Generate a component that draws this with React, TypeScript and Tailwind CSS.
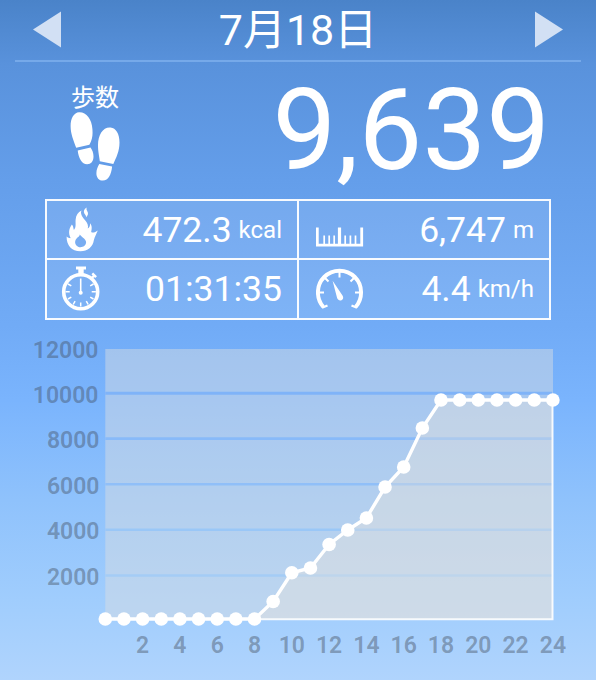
import type { ReactNode } from "react";

const HOURLY_Y = [
  619, 619, 619, 619, 619, 619, 619, 619, 619, 601.5, 572.8, 568, 544.5, 530, 518,
  487, 467, 428, 400, 400, 400, 400, 400, 400, 400,
];

const GRID = [
  { label: "10000", y: 393.2, color: "#7fb3f8", width: 3 },
  { label: "8000", y: 438.6, color: "#88baf9", width: 2.6 },
  { label: "6000", y: 484.3, color: "#90bff8", width: 2.4 },
  { label: "4000", y: 529.8, color: "#9ac7f7", width: 2.4 },
  { label: "2000", y: 575.5, color: "#a4ccf6", width: 2.4 },
];

const xAt = (hour: number) => 105.3 + hour * 18.65;

function Footprints() {
  return (
    <svg width="50" height="70" viewBox="0 0 50 70" fill="white">
      <path d="M9 .2C4 .5.6 6 .6 14c0 8 2.800 14 5.600 21.700l13.200-2.900c3-5.600 3.500-9.500 3-15.800C21.900 7 16-.3 9 .2Z" />
      <path d="M7.700 38.500 20.500 35.500c1.800 2.300 3 5.500 3 9 0 4.800-2.400 7.700-6.400 7.700-5.300 0-8.400-5.700-9.400-13.700Z" />
      <path d="M40.500 15.600C33 15 28 23 28 33c0 7 1.300 11 1.800 16.200l13.500 2.700C46 46 49.500 39.500 49.500 30.500 49.500 22 46 16 40.500 15.600Z" />
      <path d="m29.300 51.900 12.800 2.600c-.8 8-3.700 14.100-9.200 14.100-3.800 0-6.500-2.800-6.500-7.400 0-3.700 1.400-6.900 2.900-9.300Z" />
    </svg>
  );
}

function Flame() {
  return (
    <svg width="48" height="48" viewBox="0 0 48 48" fill="white">
      <path
        fillRule="evenodd"
        d="M21.500 5.500c-1.500 3 .7 6.500 3.600 9.700 2.300 2.900 3.500 5.200 2.700 8.400 2-1.200 2.400-3.400 2.200-5.400 2.300 2.300 1.800 5.600 1.200 8.800 1.500 1.200 4.300.2 6.600-1.600-1.300 3.200-3 6-3.900 9.600C32.900 42 27.700 46.200 20.500 46.200 11.500 46.200 6.500 40.500 6.600 31.500c1.400 1 2.700 1.800 4 1.600-2.600-5.600-1.500-9.700 1.300-13.600 1.500 1.600 1.300 3.500 2 5.400 2.600-3 1.400-6.200 1.700-10.200.4-4.500 2.500-7.600 5.900-9.200ZM19.800 29.500c-.1 1.800-2 2.600-3.400 4.200-2.300 2.800-1.300 6.600 1.700 8 3.500 1.500 7.600-.5 8-4.200.3-3.200-3.600-4.600-6.300-8Z"
      />
      <path d="M26.700 2.500c-3.200 2-3.400 4.700-1.800 6.700 1.100 1.300 1.300 2 1 3.200 2.400-2.100 2.600-4.500 1.400-6.200-.8-1.200-1-2.200-.6-3.700Z" />
    </svg>
  );
}

function Stopwatch() {
  return (
    <svg width="48" height="48" viewBox="0 0 48 48" fill="none" stroke="white">
      <circle cx="20.700" cy="26.700" r="17" strokeWidth="3.600" />
      <path d="M16 3h10" strokeWidth="3" />
      <path d="M21 3v7" strokeWidth="5.400" />
      <path d="m31.800 13 2.600-2.600M32.300 8.300l3.800 3.800" strokeWidth="2.400" />
      <path
        d="M5.500 26.700h4.200M31.700 26.700h4.200M20.700 37.500v4M8 19l3.300 1.900M8 34l3.300-1.900M30.200 20.900 33.500 19M30.200 32.100l3.300 1.900M13.200 39.500l1.900-3.300M28.200 39.500l-1.900-3.300"
        strokeWidth="1.500"
      />
      <path d="M20.700 13.500v14" strokeWidth="1.600" />
      <circle cx="20.700" cy="27.800" r="2" fill="white" stroke="none" />
    </svg>
  );
}

function Ruler() {
  return (
    <svg width="48" height="48" viewBox="0 0 48 48" fill="none" stroke="white">
      <path d="M1.300 22.500v17.600h44.400V22.500" strokeWidth="2.800" />
      <path d="M23.500 22.500v17" strokeWidth="3.200" />
      <path d="M8.200 30.500v9M13.200 30.500v9M18.200 30.500v9M29.200 30.500v9M34.400 30.500v9M39.500 30.500v9" strokeWidth="1.700" />
    </svg>
  );
}

function Gauge() {
  return (
    <svg width="48" height="48" viewBox="0 0 48 48" fill="none" stroke="white">
      <path d="M7.200 41.800C3.600 37.700 1.900 32.700 1.900 27.300 1.900 15.300 11.500 5.700 23.500 5.700s21.600 9.600 21.600 21.600c0 5.400-1.700 10.400-5.300 14.500" strokeWidth="3.900" />
      <path d="m6 42.800 5.500-2.300M41 42.800 35.500 40.500" strokeWidth="2.200" />
      <path d="M23.500 6.500v6M2.500 27.500H8M39 27.500h5.500M9 13l3.500 3.500M38 13 34.500 16.500" strokeWidth="2" />
      <path d="m16.600 15.800 9.900 14.800c1.400 2.300.5 4-1 4.600-1.700.7-3.600 0-4.400-2.200Z" fill="white" stroke="none" />
    </svg>
  );
}

function Metric({
  icon,
  value,
  unit,
  className = "",
}: {
  icon: ReactNode;
  value: string;
  unit?: string;
  className?: string;
}) {
  return (
    <div className={`flex items-center justify-between bg-white/10 ${className}`}>
      {icon}
      <div className="flex items-center gap-[7px] pt-px leading-[56px] whitespace-nowrap">
        <span className="text-[35.5px]">{value}</span>
        {unit && <span className="text-[24px]">{unit}</span>}
      </div>
    </div>
  );
}

function StepsChart() {
  const points = HOURLY_Y.map((y, hour) => `${xAt(hour)},${y}`).join(" ");
  return (
    <svg className="block font-semibold" width="596" height="360" viewBox="0 320 596 360">
      <rect x="105.300" y="349" width="447.700" height="270.500" fill="rgba(220,222,225,.46)" />
      {GRID.map((g) => (
        <path key={g.label} d={`M105.300 ${g.y}H552`} stroke={g.color} strokeWidth={g.width} />
      ))}
      <polygon points={`254.500,619 ${points} 553,619`} fill="rgba(239,228,219,.35)" />
      <path d="M254 619.300H552.500V400" fill="none" stroke="white" strokeOpacity=".88" strokeWidth="2" />
      <polyline points={points} fill="none" stroke="white" strokeWidth="3.400" />
      {HOURLY_Y.map((y, hour) => (
        <circle key={hour} cx={xAt(hour)} cy={y} r="6.800" fill="white" />
      ))}
      <g fill="rgba(65,75,90,.43)" fontSize="23">
        <g textAnchor="end">
          <text x="98.500" y="357.700">12000</text>
          {GRID.map((g, i) => (
            <text key={g.label} x={i === 0 ? 98.5 : 99.5} y={g.y + 9.6}>
              {g.label}
            </text>
          ))}
        </g>
        <g textAnchor="middle">
          {Array.from({ length: 12 }, (_, i) => (i + 1) * 2).map((hour) => (
            <text key={hour} x={xAt(hour)} y="653">
              {hour}
            </text>
          ))}
        </g>
      </g>
    </svg>
  );
}

export default function App() {
  return (
    <main className="h-[680px] w-[596px] overflow-hidden bg-[linear-gradient(to_bottom,#4a83c9_0px,#5992dc_65px,#649eea_180px,#71abf6_325px,#7ab4fd_400px,#8fc2fc_500px,#a0cdfd_600px,#b0d4fd_680px)] font-['Roboto','Noto_Sans_CJK_JP',sans-serif] text-white">
      <header className="mx-[15px] flex h-[62px] items-center justify-between border-b-2 border-[#76a9e9] px-[18px]">
        <svg width="28" height="60" viewBox="0 0 28 60" fill="#d2e0f4">
          <path d="M0 29.500 28 11.500v36Z" />
        </svg>
        <h1 className="text-[43px] leading-[60px] font-normal whitespace-nowrap">7月18日</h1>
        <svg width="28" height="60" viewBox="0 0 28 60" fill="#d2e0f4">
          <path d="M28 29.500 0 11.500v36Z" />
        </svg>
      </header>
      <section className="flex h-[137px] justify-between pr-[46px] pl-[70px]">
        <div className="flex flex-col pt-[22px]">
          <span className="pl-px text-[24px] leading-[28px]">歩数</span>
          <Footprints />
        </div>
        <span className="pt-[2px] text-[113.500px] leading-[134px]">9,639</span>
      </section>
      <section className="mx-[45px] grid h-[121px] grid-cols-[252px_1fr] grid-rows-2 border-2 border-white/95">
        <Metric icon={<Flame />} value="472.3" unit="kcal" className="border-r-2 border-b-2 border-white/95 pr-[15px] pl-[13px]" />
        <Metric icon={<Ruler />} value="6,747" unit="m" className="border-b-2 border-white/95 pr-[15px] pl-[17px]" />
        <Metric icon={<Stopwatch />} value="01:31:35" className="border-r-2 border-white/95 pr-[15px] pl-[13px]" />
        <Metric icon={<Gauge />} value="4.4" unit="km/h" className="pr-[15px] pl-[17px]" />
      </section>
      <StepsChart />
    </main>
  );
}
